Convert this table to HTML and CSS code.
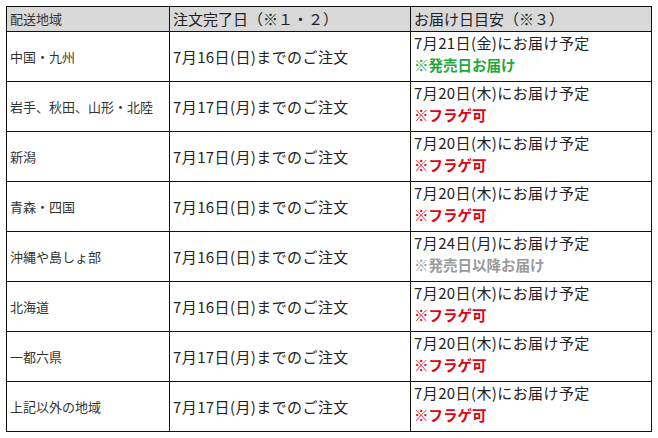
FILE: index.html
```html
<!DOCTYPE html>
<html lang="ja">
<head>
<meta charset="utf-8">
<link rel="stylesheet" href="styles.css">
</head>
<body>
<div class="tbl">
  <div class="c h c1">配送地域</div>
  <div class="c h">注文完了日（※１・２）</div>
  <div class="c h">お届け日目安（※３）</div>

  <div class="c c1 mid">中国・九州</div>
  <div class="c mid">7月16日(日)までのご注文</div>
  <div class="c d"><div>7月21日(金)にお届け予定</div><div class="note green">※発売日お届け</div></div>

  <div class="c c1 mid">岩手、秋田、山形・北陸</div>
  <div class="c mid">7月17日(月)までのご注文</div>
  <div class="c d"><div>7月20日(木)にお届け予定</div><div class="note red">※フラゲ可</div></div>

  <div class="c c1 mid">新潟</div>
  <div class="c mid">7月17日(月)までのご注文</div>
  <div class="c d"><div>7月20日(木)にお届け予定</div><div class="note red">※フラゲ可</div></div>

  <div class="c c1 mid">青森・四国</div>
  <div class="c mid">7月16日(日)までのご注文</div>
  <div class="c d"><div>7月20日(木)にお届け予定</div><div class="note red">※フラゲ可</div></div>

  <div class="c c1 mid">沖縄や島しょ部</div>
  <div class="c mid">7月16日(日)までのご注文</div>
  <div class="c d"><div>7月24日(月)にお届け予定</div><div class="note gray">※発売日以降お届け</div></div>

  <div class="c c1 mid">北海道</div>
  <div class="c mid">7月16日(日)までのご注文</div>
  <div class="c d"><div>7月20日(木)にお届け予定</div><div class="note red">※フラゲ可</div></div>

  <div class="c c1 mid">一都六県</div>
  <div class="c mid">7月17日(月)までのご注文</div>
  <div class="c d"><div>7月20日(木)にお届け予定</div><div class="note red">※フラゲ可</div></div>

  <div class="c c1 mid">上記以外の地域</div>
  <div class="c mid">7月17日(月)までのご注文</div>
  <div class="c d"><div>7月20日(木)にお届け予定</div><div class="note red">※フラゲ可</div></div>
</div>
</body>
</html>
```
FILE: styles.css
```css
html, body {
  margin: 0;
  padding: 0;
  background: #fff;
}
body {
  padding: 6px 0 0 6px;
  font-family: "Noto Sans CJK JP", "Noto Sans", sans-serif;
  color: #222;
}
.tbl {
  display: grid;
  grid-template-columns: 163px 241px 241px;
  grid-auto-rows: 50px;
  grid-template-rows: 25px;
  width: 645px;
  border-left: 1px solid #111;
  border-top: 1px solid #111;
}
.c {
  box-sizing: border-box;
  border-right: 1px solid #111;
  border-bottom: 1px solid #111;
  padding-left: 3px;
  font-size: 15px;
  line-height: 22px;
  letter-spacing: 0.4px;
  white-space: nowrap;
  overflow: hidden;
}
.c1 {
  font-size: 13px;
  letter-spacing: 0;
  color: #333;
}
.h {
  background: #d9d9d9;
  display: flex;
  align-items: center;
  padding-left: 3px;
  letter-spacing: 0;
}
.mid {
  display: flex;
  align-items: center;
}
.d {
  padding-top: 0;
}
.note {
  font-weight: bold;
  font-size: 14.5px;
  letter-spacing: 0;
}
.green { color: #21a83a; }
.red { color: #e60012; }
.gray { color: #9a9a9a; }
```
